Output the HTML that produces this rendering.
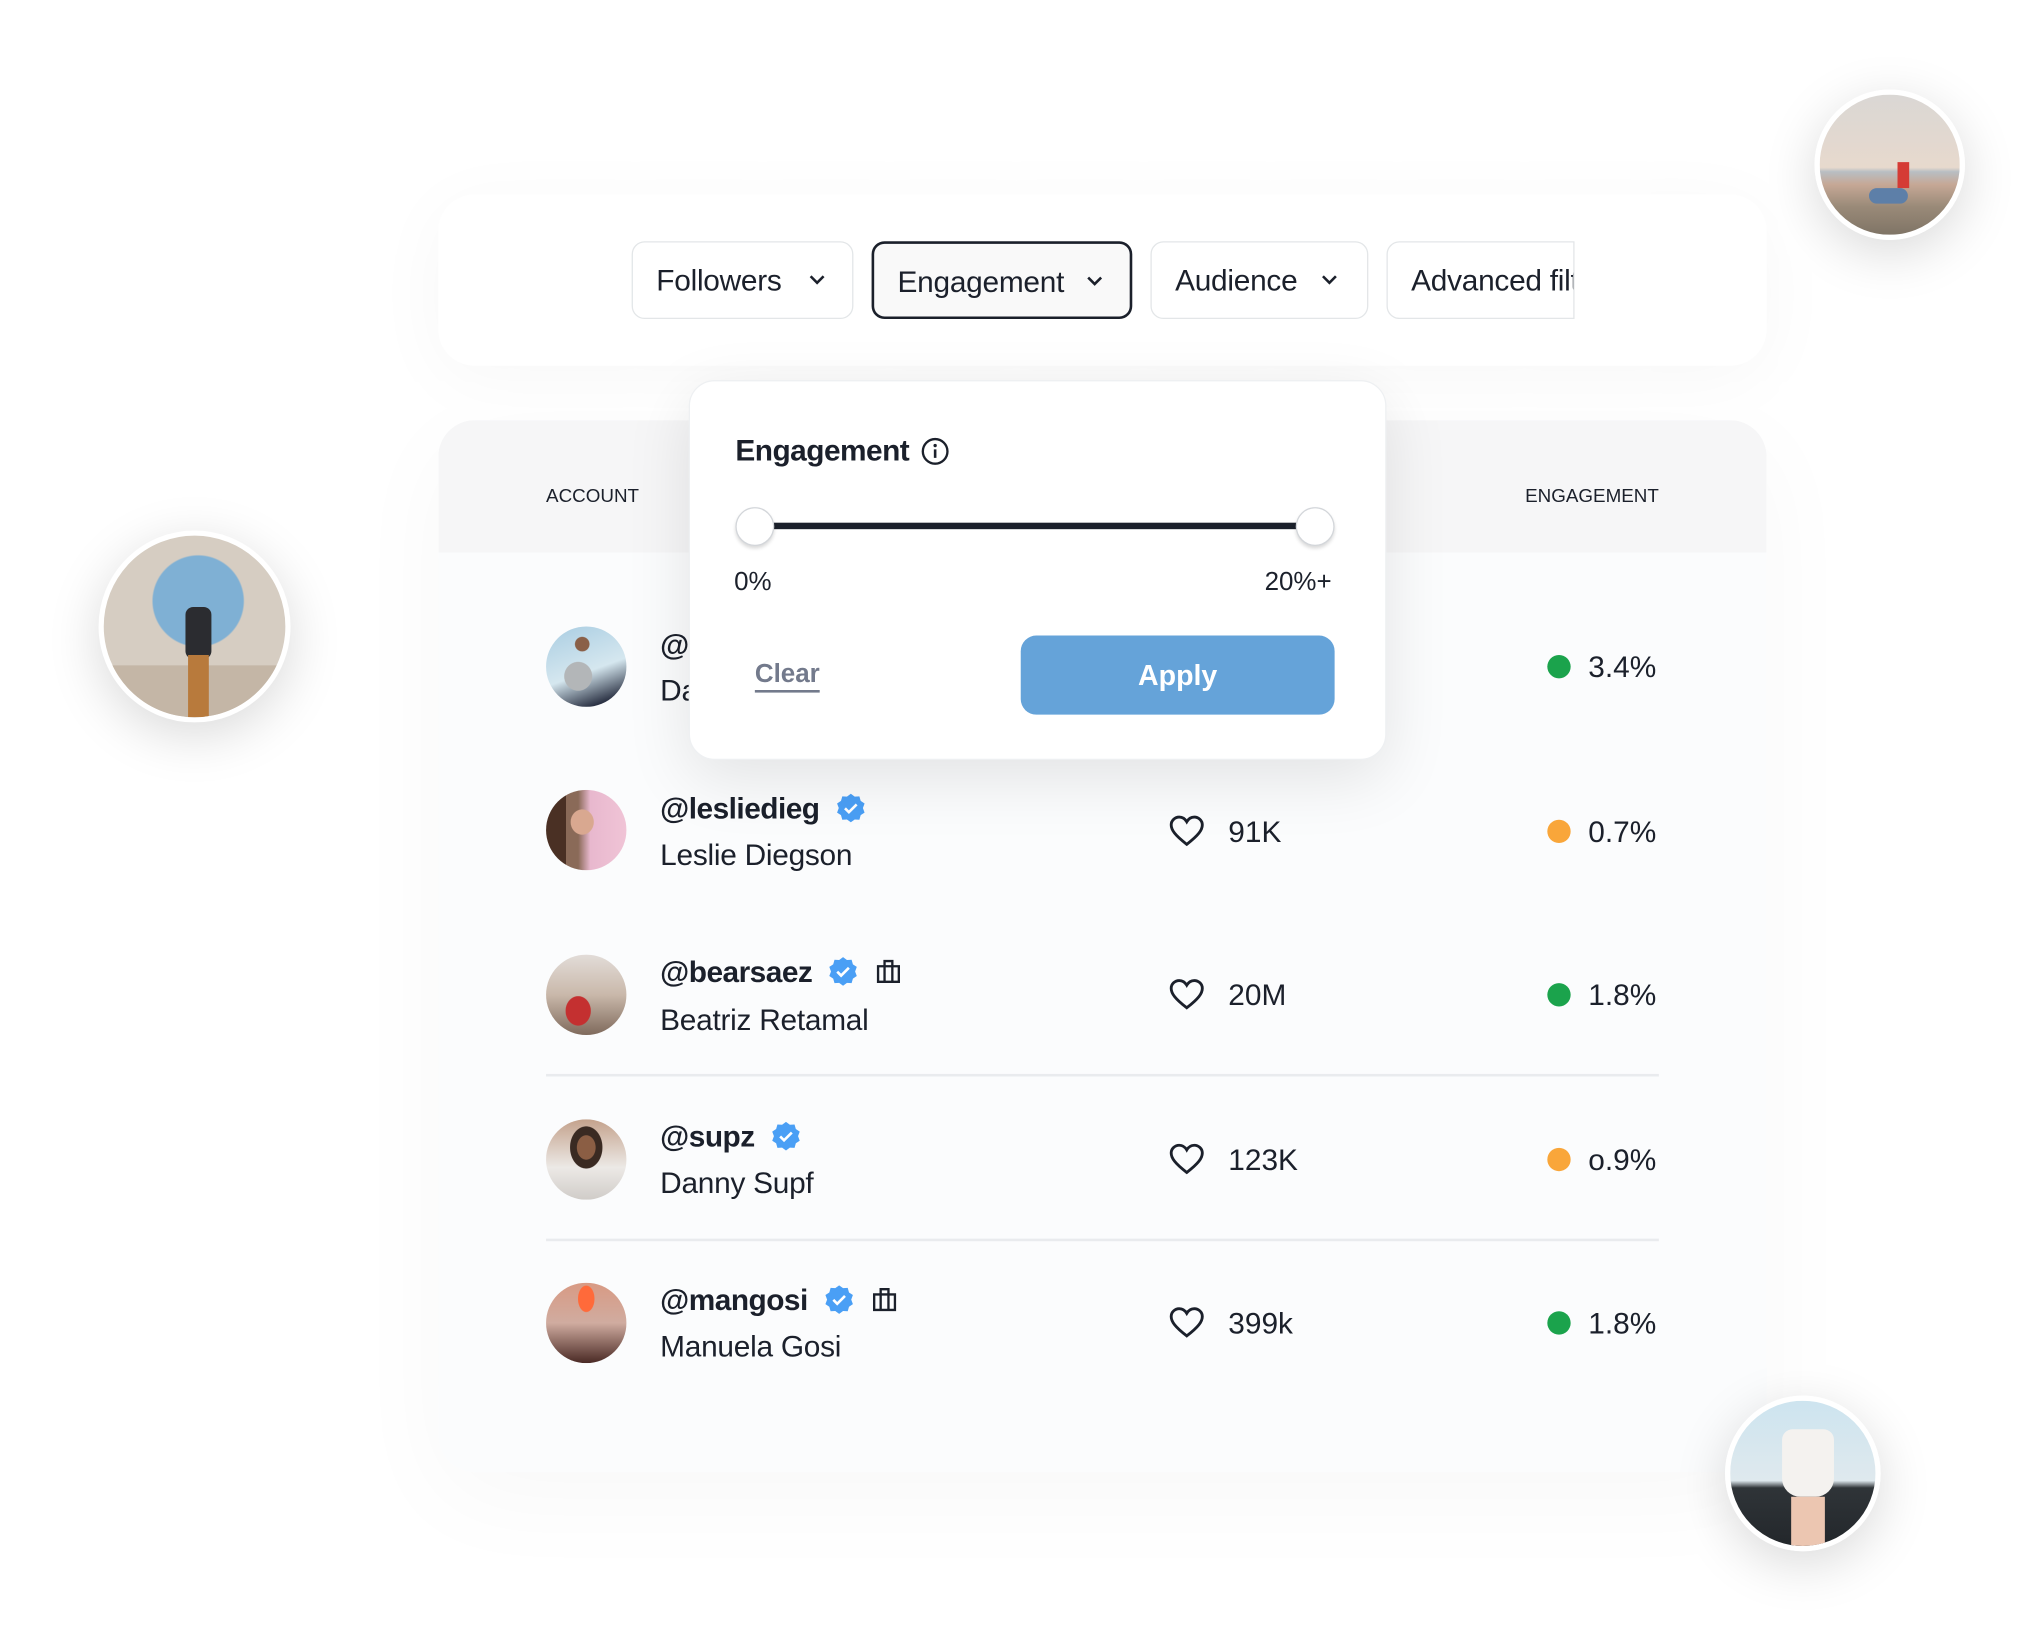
<!DOCTYPE html>
<html><head><meta charset="utf-8">
<style>
html,body{margin:0;padding:0;background:#fff;}
body{width:2032px;height:1640px;overflow:hidden;position:relative;font-family:"Liberation Sans",sans-serif;color:#1b202b;}
#s{position:absolute;left:0;top:0;width:1567px;height:1265px;transform:scale(1.297);transform-origin:0 0;}
.abs{position:absolute;}
.card{left:338px;top:150px;width:1024px;height:132px;background:#fff;border-radius:28px;box-shadow:0 10px 60px rgba(0,0,0,0.035);}
.btn{position:absolute;top:186px;height:60px;border:1.5px solid #e3e6e8;border-radius:10px;background:#fff;font-size:23px;line-height:58px;box-sizing:border-box;padding-left:18px;white-space:nowrap;overflow:hidden;letter-spacing:-0.2px;}
.btn svg{position:absolute;top:24px;}
.table{left:338px;top:324px;width:1024px;height:811px;background:#fbfcfd;border-radius:28px;overflow:hidden;box-shadow:0 20px 80px rgba(0,0,0,0.03);}
.thead{position:absolute;left:0;top:0;width:100%;height:102px;background:#f6f6f7;}
.th{position:absolute;top:51px;font-size:14.5px;color:#1b202b;}
.av{position:absolute;left:421px;width:62px;height:62px;border-radius:50%;}
.h{position:absolute;left:509px;font-size:23px;font-weight:bold;display:flex;align-items:center;letter-spacing:-0.4px;height:30px;}
.h svg{margin-left:12px;flex:none;}
.h svg.bag{margin-left:13px;}
.n{position:absolute;left:509px;font-size:23px;letter-spacing:-0.2px;}
.val{position:absolute;left:947px;font-size:23px;}
.heart{position:absolute;left:901px;}
.dot{position:absolute;left:1193px;width:18px;height:18px;border-radius:50%;}
.pct{position:absolute;right:290px;font-size:23px;}
.div{position:absolute;left:421px;width:858px;height:2px;background:#e9ebee;}
.pop{left:531px;top:293px;width:538px;height:293px;background:#fff;border-radius:20px;box-shadow:0 14px 50px rgba(0,0,0,0.10);border:1px solid #eef0f2;box-sizing:border-box;}
.knob{position:absolute;width:28px;height:28px;border-radius:50%;background:#fff;border:1.5px solid #d3d6da;box-shadow:0 2px 3px rgba(0,0,0,0.15);}
.float{position:absolute;border-radius:50%;border:4px solid #fff;box-shadow:0 10px 40px rgba(0,0,0,0.15);box-sizing:border-box;overflow:hidden;}
</style></head><body><div id="s">

<div class="abs card"></div>
<div class="btn" style="left:487px;width:171px;">Followers<svg style="left:135px" width="14" height="10" viewBox="0 0 14 10"><path d="M2 2l5 5 5-5" fill="none" stroke="#1b202b" stroke-width="2"/></svg></div>
<div class="btn" style="left:672px;width:201px;border:2px solid #1b202b;background:#f9f9f9;">Engagement<svg style="left:163px" width="14" height="10" viewBox="0 0 14 10"><path d="M2 2l5 5 5-5" fill="none" stroke="#1b202b" stroke-width="2"/></svg></div>
<div class="btn" style="left:887px;width:168px;">Audience<svg style="left:130px" width="14" height="10" viewBox="0 0 14 10"><path d="M2 2l5 5 5-5" fill="none" stroke="#1b202b" stroke-width="2"/></svg></div>
<div class="btn" style="left:1069px;width:145px;border-top-right-radius:0;border-bottom-right-radius:0;">Advanced filters</div>

<div class="abs table">
 <div class="thead"></div>
 <div class="th" style="left:83px;">ACCOUNT</div>
 <div class="th" style="right:83px;">ENGAGEMENT</div>
</div>

<!-- row 1 -->
<div class="av" style="top:483px;background:radial-gradient(circle at 45% 22%,#8a6048 0 9%,transparent 10%),radial-gradient(ellipse at 40% 62%,#b3b6b8 0 20%,transparent 21%),linear-gradient(160deg,#a9cde2,#d5e7ef 55%,#2b3244 88%);"></div>
<div class="h" style="top:482px;">@danielsmith</div>
<div class="n" style="top:519px;">Daniel Smith</div>
<div class="dot" style="top:505px;background:#1ba34c;"></div>
<div class="pct" style="top:501px;">3.4%</div>

<!-- row 2 -->
<div class="av" style="top:609px;background:radial-gradient(ellipse at 45% 40%,#d9a890 0 18%,transparent 19%),linear-gradient(90deg,#4a3024 0 25%,#8a6a58 25% 40%,#e8b8ce 55%,#f0c4d6);"></div>
<div class="h" style="top:608px;">@lesliedieg<svg width="24" height="24" viewBox="0 0 24 24"><path d="M12 1l3 2.2 3.6-.2 1 3.5 3 2-1.3 3.5 1.3 3.5-3 2-1 3.5-3.6-.2L12 23l-3-2.2-3.6.2-1-3.5-3-2L2.7 12 1.4 8.5l3-2 1-3.5 3.6.2z" fill="#4a9ff5"/><path d="M7.5 12.2l3 3 6-6" fill="none" stroke="#fff" stroke-width="2"/></svg></div>
<div class="n" style="top:646px;">Leslie Diegson</div>
<svg class="heart" style="top:628px" width="28" height="26" viewBox="0 0 28 26"><path d="M14 23 C5 16 2 12 2 8 C2 4.5 5 2 8.2 2 C10.7 2 12.7 3.4 14 5.6 C15.3 3.4 17.3 2 19.8 2 C23 2 26 4.5 26 8 C26 12 23 16 14 23Z" fill="none" stroke="#1b202b" stroke-width="2.2"/></svg>
<div class="val" style="top:628px;">91K</div>
<div class="dot" style="top:632px;background:#f9a63a;"></div>
<div class="pct" style="top:628px;">0.7%</div>

<!-- row 3 -->
<div class="av" style="top:736px;background:radial-gradient(ellipse at 40% 70%,#c43030 0 18%,transparent 19%),linear-gradient(180deg,#e2dcd8,#c9b8aa 50%,#7f6a5c);"></div>
<div class="h" style="top:734px;">@bearsaez<svg width="24" height="24" viewBox="0 0 24 24"><path d="M12 1l3 2.2 3.6-.2 1 3.5 3 2-1.3 3.5 1.3 3.5-3 2-1 3.5-3.6-.2L12 23l-3-2.2-3.6.2-1-3.5-3-2L2.7 12 1.4 8.5l3-2 1-3.5 3.6.2z" fill="#4a9ff5"/><path d="M7.5 12.2l3 3 6-6" fill="none" stroke="#fff" stroke-width="2"/></svg><svg class="bag" width="20" height="20" viewBox="0 0 20 20"><path d="M2 6h16v12H2z M7 6V2h6v4 M7 6v12 M13 6v12" fill="none" stroke="#1b202b" stroke-width="1.8"/></svg></div>
<div class="n" style="top:773px;">Beatriz Retamal</div>
<svg class="heart" style="top:754px" width="28" height="26" viewBox="0 0 28 26"><path d="M14 23 C5 16 2 12 2 8 C2 4.5 5 2 8.2 2 C10.7 2 12.7 3.4 14 5.6 C15.3 3.4 17.3 2 19.8 2 C23 2 26 4.5 26 8 C26 12 23 16 14 23Z" fill="none" stroke="#1b202b" stroke-width="2.2"/></svg>
<div class="val" style="top:754px;">20M</div>
<div class="dot" style="top:758px;background:#1ba34c;"></div>
<div class="pct" style="top:754px;">1.8%</div>
<div class="div" style="top:828px;"></div>

<!-- row 4 -->
<div class="av" style="top:863px;background:radial-gradient(ellipse at 50% 35%,#8b5e44 0 16%,#3a2a22 17% 28%,transparent 29%),linear-gradient(180deg,#c4a28c,#ece9e6 60%,#d0ccc8);"></div>
<div class="h" style="top:861px;">@supz<svg width="24" height="24" viewBox="0 0 24 24"><path d="M12 1l3 2.2 3.6-.2 1 3.5 3 2-1.3 3.5 1.3 3.5-3 2-1 3.5-3.6-.2L12 23l-3-2.2-3.6.2-1-3.5-3-2L2.7 12 1.4 8.5l3-2 1-3.5 3.6.2z" fill="#4a9ff5"/><path d="M7.5 12.2l3 3 6-6" fill="none" stroke="#fff" stroke-width="2"/></svg></div>
<div class="n" style="top:899px;">Danny Supf</div>
<svg class="heart" style="top:881px" width="28" height="26" viewBox="0 0 28 26"><path d="M14 23 C5 16 2 12 2 8 C2 4.5 5 2 8.2 2 C10.7 2 12.7 3.4 14 5.6 C15.3 3.4 17.3 2 19.8 2 C23 2 26 4.5 26 8 C26 12 23 16 14 23Z" fill="none" stroke="#1b202b" stroke-width="2.2"/></svg>
<div class="val" style="top:881px;">123K</div>
<div class="dot" style="top:885px;background:#f9a63a;"></div>
<div class="pct" style="top:881px;">o.9%</div>
<div class="div" style="top:955px;"></div>

<!-- row 5 -->
<div class="av" style="top:989px;background:radial-gradient(ellipse at 50% 20%,#ff6a3a 0 14%,transparent 15%),linear-gradient(180deg,#d89a84,#d0aca0 50%,#4a2a25);"></div>
<div class="h" style="top:987px;">@mangosi<svg width="24" height="24" viewBox="0 0 24 24"><path d="M12 1l3 2.2 3.6-.2 1 3.5 3 2-1.3 3.5 1.3 3.5-3 2-1 3.5-3.6-.2L12 23l-3-2.2-3.6.2-1-3.5-3-2L2.7 12 1.4 8.5l3-2 1-3.5 3.6.2z" fill="#4a9ff5"/><path d="M7.5 12.2l3 3 6-6" fill="none" stroke="#fff" stroke-width="2"/></svg><svg class="bag" width="20" height="20" viewBox="0 0 20 20"><path d="M2 6h16v12H2z M7 6V2h6v4 M7 6v12 M13 6v12" fill="none" stroke="#1b202b" stroke-width="1.8"/></svg></div>
<div class="n" style="top:1025px;">Manuela Gosi</div>
<svg class="heart" style="top:1007px" width="28" height="26" viewBox="0 0 28 26"><path d="M14 23 C5 16 2 12 2 8 C2 4.5 5 2 8.2 2 C10.7 2 12.7 3.4 14 5.6 C15.3 3.4 17.3 2 19.8 2 C23 2 26 4.5 26 8 C26 12 23 16 14 23Z" fill="none" stroke="#1b202b" stroke-width="2.2"/></svg>
<div class="val" style="top:1007px;">399k</div>
<div class="dot" style="top:1011px;background:#1ba34c;"></div>
<div class="pct" style="top:1007px;">1.8%</div>

<!-- popup -->
<div class="abs pop"></div>
<div class="abs" style="left:567px;top:334px;font-size:23px;font-weight:bold;letter-spacing:-0.4px;display:flex;align-items:center;">Engagement<svg style="margin-left:9px" width="22" height="22" viewBox="0 0 22 22"><circle cx="11" cy="11" r="9.5" fill="none" stroke="#1b202b" stroke-width="1.8"/><circle cx="11" cy="6.5" r="1.3" fill="#1b202b"/><path d="M11 9.5v6.5" stroke="#1b202b" stroke-width="2"/></svg></div>
<div class="abs" style="left:583px;top:403px;width:430px;height:5px;background:#1b202b;"></div>
<div class="knob" style="left:567px;top:391px;"></div>
<div class="knob" style="left:999px;top:391px;"></div>
<div class="abs" style="left:566px;top:438px;font-size:20px;">0%</div>
<div class="abs" style="left:975px;top:438px;font-size:20px;">20%+</div>
<div class="abs" style="left:582px;top:508px;font-size:20px;font-weight:bold;color:#737a8c;border-bottom:2px solid #737a8c;line-height:24px;">Clear</div>
<div class="abs" style="left:787px;top:490px;width:242px;height:61px;background:#65a3d9;border-radius:12px;color:#fff;font-size:22px;font-weight:bold;text-align:center;line-height:61px;">Apply</div>

<!-- floating avatars -->
<div class="float" style="left:76px;top:409px;width:148px;height:148px;background:radial-gradient(circle at 52% 36%,#7fb0d4 0 30%,#d6cdc2 31%),#d6cdc2;">
 <div style="position:absolute;left:0;top:100px;width:148px;height:48px;background:#c4b6a6;"></div>
 <div style="position:absolute;left:63px;top:55px;width:20px;height:40px;background:#2b2c30;border-radius:6px;"></div>
 <div style="position:absolute;left:65px;top:92px;width:16px;height:48px;background:#b87a3c;"></div>
</div>
<div class="float" style="left:1399px;top:69px;width:116px;height:116px;background:linear-gradient(180deg,#dad7d4 0,#e7d9cd 52%,#b8bec3 55%,#c6a896 64%,#9a8a78 80%,#7f7466);">
 <div style="position:absolute;left:60px;top:52px;width:9px;height:20px;background:#d53b35;"></div>
 <div style="position:absolute;left:38px;top:72px;width:30px;height:12px;background:#5d7fa8;border-radius:6px;"></div>
</div>
<div class="float" style="left:1330px;top:1076px;width:120px;height:120px;background:linear-gradient(180deg,#cde4ef 0,#dfe9ee 55%,#2f3438 60%,#23272b);">
 <div style="position:absolute;left:40px;top:22px;width:40px;height:52px;background:#f4f2ef;border-radius:8px 8px 14px 14px;"></div>
 <div style="position:absolute;left:47px;top:74px;width:26px;height:44px;background:#ecc6b1;"></div>
</div>

</div></body></html>
